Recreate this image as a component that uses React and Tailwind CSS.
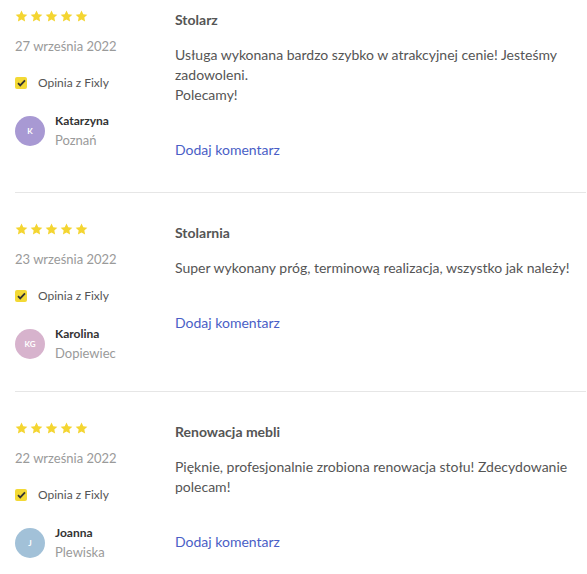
const reviews = [
  {
    title: "Stolarz",
    body: "Usługa wykonana bardzo szybko w atrakcyjnej cenie! Jesteśmy zadowoleni.\nPolecamy!",
    date: "27 września 2022",
    initials: "K",
    avatar: "bg-[#a899d3]",
    name: "Katarzyna",
    city: "Poznań",
  },
  {
    title: "Stolarnia",
    body: "Super wykonany próg, terminową realizacja, wszystko jak należy!",
    date: "23 września 2022",
    initials: "KG",
    avatar: "bg-[#d7b3cd]",
    name: "Karolina",
    city: "Dopiewiec",
  },
  {
    title: "Renowacja mebli",
    body: "Pięknie, profesjonalnie zrobiona renowacja stołu! Zdecydowanie polecam!",
    date: "22 września 2022",
    initials: "J",
    avatar: "bg-[#a2c1d8]",
    name: "Joanna",
    city: "Plewiska",
  },
];

function Star() {
  return (
    <svg width="13" height="12" viewBox="0 0 24 23" className="block">
      <path
        d="M12 0.8l3.4 7.2 7.8 1-5.8 5.4 1.5 7.8L12 18.4l-6.9 3.8 1.5-7.8L0.8 9l7.8-1z"
        fill="#f4d531"
      />
    </svg>
  );
}

function Review({ r, first }) {
  return (
    <div
      className={`flex border-b border-[#e6e6e6] ${first ? "pt-[10px]" : "pt-[30px]"} pb-[32px]`}
    >
      <div className="w-[160px] shrink-0">
        <div className="flex gap-[2px] h-[12px]">
          {[0, 1, 2, 3, 4].map((i) => (
            <Star key={i} />
          ))}
        </div>
        <div className="mt-[16px] text-[13px] leading-[16px] text-[#9a9a9a]">{r.date}</div>
        <div className="mt-[21px] flex items-center h-[16px]">
          <span className="w-[12px] h-[12px] rounded-[2px] bg-[#f3d935] flex items-center justify-center">
            <svg width="9" height="8" viewBox="0 0 9 8">
              <path d="M1 4.2l2.2 2.2L8 1.4" stroke="#333" strokeWidth="1.8" fill="none" />
            </svg>
          </span>
          <span className="ml-[11px] text-[12px] text-[#555]">Opinia z Fixly</span>
        </div>
        <div className="mt-[25px] flex items-start h-[30px]">
          <div
            className={`w-[30px] h-[30px] shrink-0 rounded-full ${r.avatar} flex items-center justify-center text-white text-[8px] font-bold`}
          >
            {r.initials}
          </div>
          <div className="ml-[10px] -mt-[2px]">
            <div className="text-[12px] leading-[14px] font-bold text-[#333]">{r.name}</div>
            <div className="text-[13px] leading-[16px] mt-[4px] text-[#9a9a9a]">{r.city}</div>
          </div>
        </div>
      </div>
      <div className="flex-1">
        <div className="text-[14px] leading-[20px] font-bold text-[#555]">{r.title}</div>
        <div className="mt-[15px] text-[14px] leading-[20px] text-[#555] whitespace-pre-line">
          {r.body}
        </div>
        <div className="mt-[35px] text-[14px] leading-[20px] text-[#4a5ec6]">Dodaj komentarz</div>
      </div>
    </div>
  );
}

export default function App() {
  return (
    <div className="bg-white pl-[15px] pr-[1px] w-[587px] h-[574px] overflow-hidden" style={{ fontFamily: "Lato, sans-serif" }}>
      {reviews.map((r, i) => (
        <Review key={i} r={r} first={i === 0} />
      ))}
    </div>
  );
}
